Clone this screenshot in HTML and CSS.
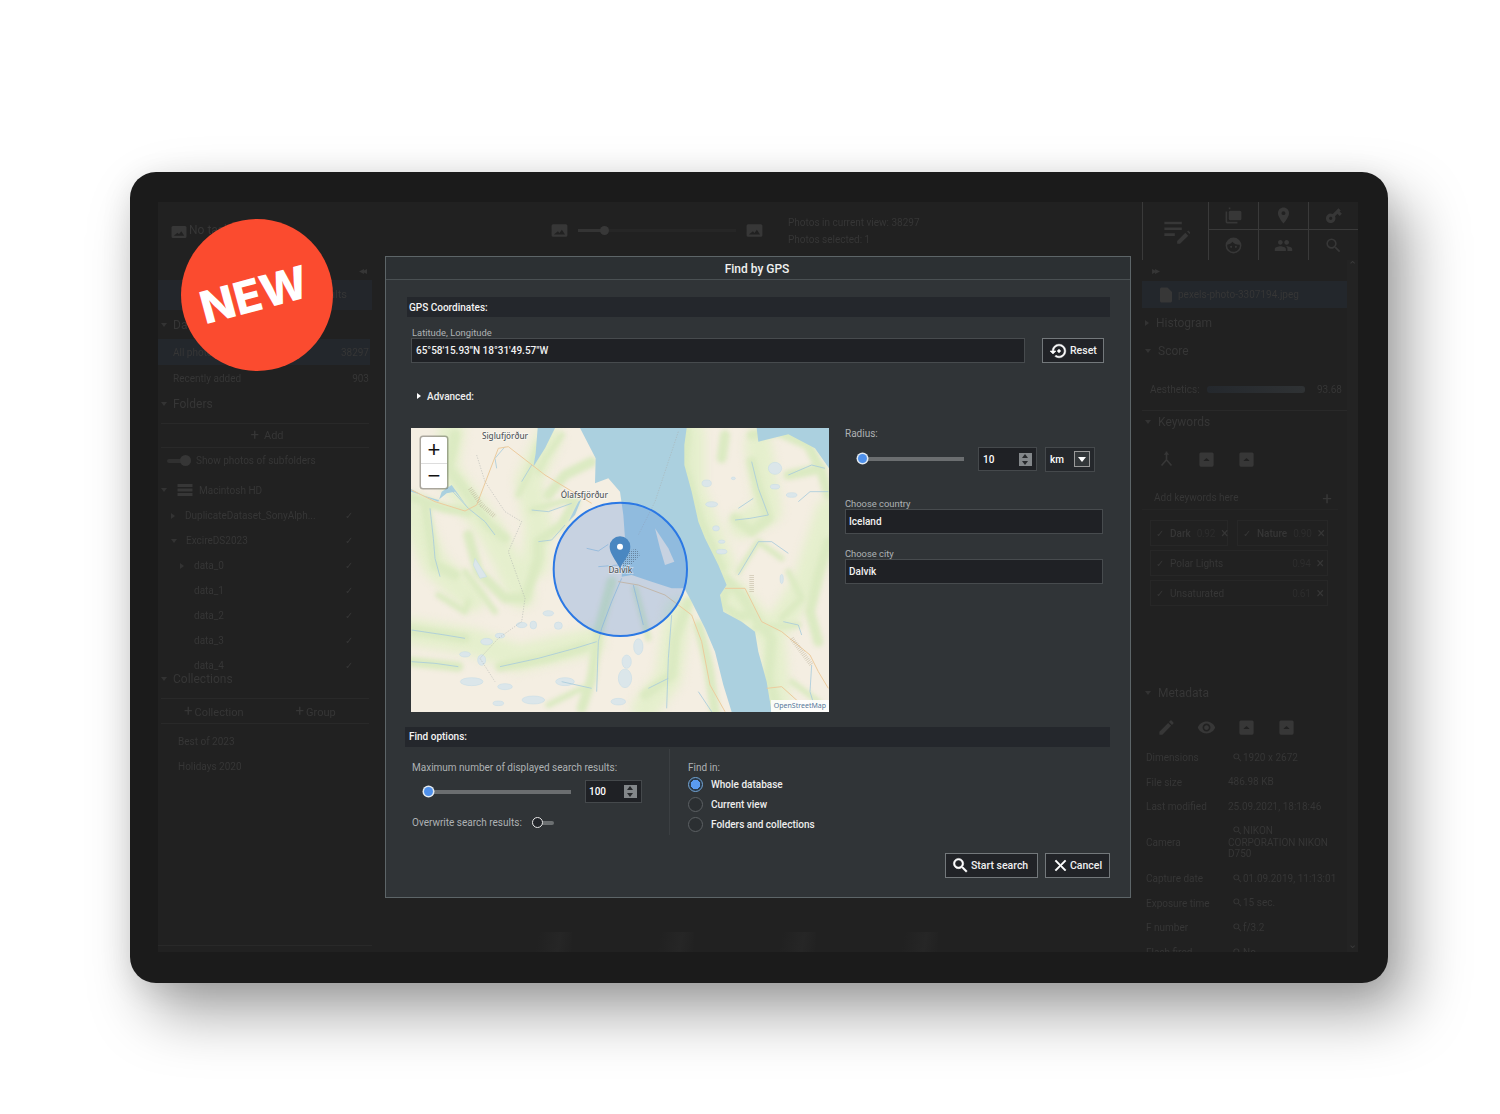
FILE: index.html
```html
<!DOCTYPE html>
<html lang="en">
<head>
<meta charset="utf-8">
<title>Find by GPS</title>
<link rel="stylesheet" href="styles.css">
</head>
<body>
<svg class="defs" width="0" height="0" aria-hidden="true">
  <symbol id="i-search" viewBox="0 0 24 24"><path d="M15.5 14h-.79l-.28-.27A6.471 6.471 0 0 0 16 9.5 6.5 6.5 0 1 0 9.5 16c1.61 0 3.09-.59 4.23-1.57l.27.28v.79l5 4.99L20.49 19l-4.99-5zm-6 0C7.01 14 5 11.99 5 9.5S7.01 5 9.5 5 14 7.01 14 9.5 11.99 14 9.5 14z"/></symbol>
  <symbol id="i-close" viewBox="0 0 24 24"><path d="M19 6.41L17.59 5 12 10.59 6.41 5 5 6.41 10.59 12 5 17.59 6.41 19 12 13.41 17.59 19 19 17.59 13.41 12z"/></symbol>
  <symbol id="i-reset" viewBox="0 0 24 24"><path d="M14 12c0-1.1-.9-2-2-2s-2 .9-2 2 .9 2 2 2 2-.9 2-2zm-2-9c-4.97 0-9 4.03-9 9H0l4 4 4-4H5c0-3.87 3.13-7 7-7s7 3.13 7 7-3.13 7-7 7c-1.51 0-2.91-.49-4.06-1.3l-1.42 1.44C8.04 20.3 9.94 21 12 21c4.97 0 9-4.03 9-9s-4.03-9-9-9z"/></symbol>
  <symbol id="i-place" viewBox="0 0 24 24"><path d="M12 2C8.13 2 5 5.13 5 9c0 5.25 7 13 7 13s7-7.75 7-13c0-3.87-3.13-7-7-7zm0 9.5a2.5 2.5 0 0 1 0-5 2.5 2.5 0 0 1 0 5z"/></symbol>
  <symbol id="i-people" viewBox="0 0 24 24"><path d="M16 11c1.66 0 2.99-1.34 2.99-3S17.66 5 16 5c-1.66 0-3 1.34-3 3s1.34 3 3 3zm-8 0c1.66 0 2.99-1.34 2.99-3S9.66 5 8 5C6.34 5 5 6.34 5 8s1.34 3 3 3zm0 2c-2.33 0-7 1.17-7 3.5V19h14v-2.5c0-2.33-4.67-3.5-7-3.5zm8 0c-.29 0-.62.02-.97.05 1.16.84 1.97 1.97 1.97 3.45V19h6v-2.5c0-2.33-4.67-3.5-7-3.5z"/></symbol>
  <symbol id="i-edit" viewBox="0 0 24 24"><path d="M3 17.25V21h3.75L17.81 9.94l-3.75-3.75L3 17.25zM20.71 7.04a1 1 0 0 0 0-1.41l-2.34-2.34a1 1 0 0 0-1.41 0l-1.83 1.83 3.75 3.75 1.83-1.83z"/></symbol>
  <symbol id="i-eye" viewBox="0 0 24 24"><path d="M12 4.5C7 4.5 2.73 7.61 1 12c1.73 4.39 6 7.5 11 7.5s9.27-3.11 11-7.5c-1.73-4.39-6-7.5-11-7.5zM12 17c-2.76 0-5-2.24-5-5s2.24-5 5-5 5 2.24 5 5-2.24 5-5 5zm0-8c-1.66 0-3 1.34-3 3s1.34 3 3 3 3-1.34 3-3-1.34-3-3-3z"/></symbol>
  <symbol id="i-file" viewBox="0 0 24 24"><path d="M14 2H6c-1.1 0-2 .9-2 2v16c0 1.1.9 2 2 2h12c1.1 0 2-.9 2-2V8l-6-6z"/></symbol>
  <symbol id="i-copy" viewBox="0 0 24 24"><path d="M2 7h2v13h13v2H4a2 2 0 0 1-2-2zM6 2h2v2H6zM8 6h12a2 2 0 0 1 2 2v8a2 2 0 0 1-2 2H8a2 2 0 0 1-2-2V8a2 2 0 0 1 2-2z"/></symbol>
  <symbol id="i-key" viewBox="0 0 24 24"><path transform="rotate(-45 12 12)" d="M12.65 10A5.99 5.99 0 0 0 7 6c-3.31 0-6 2.69-6 6s2.69 6 6 6a5.99 5.99 0 0 0 5.65-4H17v4h4v-4h2v-4H12.65zM7 14c-1.1 0-2-.9-2-2s.9-2 2-2 2 .9 2 2-.9 2-2 2z"/></symbol>
  <symbol id="i-notes" viewBox="0 0 24 24"><path d="M2 4h15v2.2H2zM2 9h15v2.2H2zM2 14h9v2.2H2zM13 20.5v2.5h2.5l7-7-2.500-2.500zM21.500 12.500l2 2 1-1-2-2z"/></symbol>
  <symbol id="i-face" viewBox="0 0 24 24"><path d="M12 2a10 10 0 1 0 0 20 10 10 0 0 0 0-20zm0 18a8 8 0 0 1-8-8c0-.4 0-.8.1-1.100 2.600-.2 5-1.500 6.400-3.600 2 2.300 5 3.700 8.300 3.700h1c.1.300.2.700.2 1 0 4.400-3.600 8-8 8zM9 15a1.300 1.300 0 1 0 0-2.600A1.300 1.300 0 0 0 9 15zm6 0a1.300 1.300 0 1 0 0-2.600 1.300 1.300 0 0 0 0 2.600z"/></symbol>
  <symbol id="i-box" viewBox="0 0 24 24"><path d="M5 3h14a2 2 0 0 1 2 2v14a2 2 0 0 1-2 2H5a2 2 0 0 1-2-2V5a2 2 0 0 1 2-2zm7 7l-4 4h8z"/></symbol>
  <symbol id="i-photo" viewBox="0 0 24 24"><path d="M4 4h16a2 2 0 0 1 2 2v12a2 2 0 0 1-2 2H4a2 2 0 0 1-2-2V6a2 2 0 0 1 2-2zm1 13h14l-4-6-3 4-2-2z"/></symbol>
  <symbol id="i-merge" viewBox="0 0 24 24"><path d="M11 2h2v10l6 7-1.500 1.300L12 14l-5.500 6.300L5 19l6-7zM8.500 6L12 2l3.500 4z"/></symbol>
</svg>

<main class="device">
  <div class="screen">
    <aside class="left">
      <div class="l-top">
        <svg class="ic ic-16"><use href="#i-photo"/></svg><span>No task</span>
      </div>
      <div class="l-collapse">&#9666;&#9666;</div>
      <div class="l-tab">Filter results</div>
      <div class="l-head l-db"><i class="tri"></i>Database</div>
      <div class="l-item l-sel"><span>All photos</span><span>38297</span></div>
      <div class="l-item"><span>Recently added</span><span>903</span></div>
      <div class="l-head l-fold"><i class="tri"></i>Folders</div>
      <div class="l-add"><span class="plus">+</span>Add</div>
      <div class="l-sub"><i class="dim-toggle"></i>Show photos of subfolders</div>
      <div class="l-drive"><i class="tri"></i><svg class="ic ic-16" viewBox="0 0 24 24"><path d="M2 4h20v4H2zM2 10h20v4H2zM2 16h20v4H2z"/></svg>Macintosh HD</div>
      <div class="tree">
        <div class="t-row t1"><i class="tri-r"></i><span>DuplicateDataset_SonyAlph...</span><b>&#10003;</b></div>
        <div class="t-row t1"><i class="tri"></i><span>ExcireDS2023</span><b>&#10003;</b></div>
        <div class="t-row t2"><i class="tri-r"></i><span>data_0</span><b>&#10003;</b></div>
        <div class="t-row t2"><i></i><span>data_1</span><b>&#10003;</b></div>
        <div class="t-row t2"><i></i><span>data_2</span><b>&#10003;</b></div>
        <div class="t-row t2"><i></i><span>data_3</span><b>&#10003;</b></div>
        <div class="t-row t2"><i></i><span>data_4</span><b>&#10003;</b></div>
      </div>
      <div class="l-head l-coll"><i class="tri"></i>Collections</div>
      <div class="l-actions"><span><span class="plus">+</span>Collection</span><span><span class="plus">+</span>Group</span></div>
      <div class="l-c-item">Best of 2023</div>
      <div class="l-c-item">Holidays 2020</div>
    </aside>

    <section class="center">
      <div class="c-top">
        <svg class="ic ic-18"><use href="#i-photo"/></svg>
        <div class="c-slider"><i></i></div>
        <svg class="ic ic-18"><use href="#i-photo"/></svg>
        <div class="c-info"><div>Photos in current view: 38297</div><div>Photos selected: 1</div></div>
      </div>
      <div class="c-thumbs"><i></i><i></i><i></i><i></i></div>
    </section>

    <aside class="right">
      <div class="r-tools">
        <div class="r-main"><svg class="ic ic-28"><use href="#i-notes"/></svg></div>
        <div class="r-grid">
          <div><svg class="ic ic-18"><use href="#i-copy"/></svg></div>
          <div><svg class="ic ic-18"><use href="#i-place"/></svg></div>
          <div><svg class="ic ic-18"><use href="#i-key"/></svg></div>
          <div><svg class="ic ic-18"><use href="#i-face"/></svg></div>
          <div><svg class="ic ic-18"><use href="#i-people"/></svg></div>
          <div><svg class="ic ic-18"><use href="#i-search"/></svg></div>
        </div>
      </div>
      <div class="r-expand">&#9656;&#9656;</div>
      <div class="r-file"><svg class="ic ic-16"><use href="#i-file"/></svg>pexels-photo-3307194.jpeg</div>
      <div class="r-head r-hist"><i class="tri-r"></i>Histogram</div>
      <div class="r-head"><i class="tri"></i>Score</div>
      <div class="r-score"><span>Aesthetics:</span><i class="bar"></i><span>93.68</span></div>
      <div class="r-head r-keys"><i class="tri"></i>Keywords</div>
      <div class="r-icons">
        <svg class="ic ic-18"><use href="#i-merge"/></svg>
        <svg class="ic ic-18"><use href="#i-box"/></svg>
        <svg class="ic ic-18"><use href="#i-box"/></svg>
      </div>
      <div class="r-add"><span>Add keywords here</span><b>+</b></div>
      <div class="tags">
        <div class="tag tag-s"><em>&#10003;</em><strong>Dark</strong><span>0.92</span><em class="x">&#215;</em></div>
        <div class="tag tag-m"><em>&#10003;</em><strong>Nature</strong><span>0.90</span><em class="x">&#215;</em></div>
        <div class="tag tag-l"><em>&#10003;</em><strong class="thin">Polar Lights</strong><span class="push">0.94</span><em class="x">&#215;</em></div>
        <div class="tag tag-l"><em>&#10003;</em><strong class="thin">Unsaturated</strong><span class="push">0.61</span><em class="x">&#215;</em></div>
      </div>
      <div class="r-head r-meta"><i class="tri"></i>Metadata</div>
      <div class="r-icons r-icons-m">
        <svg class="ic ic-18"><use href="#i-edit"/></svg>
        <svg class="ic ic-18"><use href="#i-eye"/></svg>
        <svg class="ic ic-18"><use href="#i-box"/></svg>
        <svg class="ic ic-18"><use href="#i-box"/></svg>
      </div>
      <dl class="meta">
        <div><dt>Dimensions</dt><dd><svg class="ic ic-10"><use href="#i-search"/></svg>1920 x 2672</dd></div>
        <div><dt>File size</dt><dd>486.98 KB</dd></div>
        <div><dt>Last modified</dt><dd>25.09.2021, 18:18:46</dd></div>
        <div class="cam"><dt>Camera</dt><dd><svg class="ic ic-10"><use href="#i-search"/></svg>NIKON<br>CORPORATION NIKON<br>D750</dd></div>
        <div><dt>Capture date</dt><dd><svg class="ic ic-10"><use href="#i-search"/></svg>01.09.2019, 11:13:01</dd></div>
        <div><dt>Exposure time</dt><dd><svg class="ic ic-10"><use href="#i-search"/></svg>15 sec.</dd></div>
        <div><dt>F number</dt><dd><svg class="ic ic-10"><use href="#i-search"/></svg>f/3.2</dd></div>
        <div><dt>Flash fired</dt><dd><svg class="ic ic-10"><use href="#i-search"/></svg>No</dd></div>
      </dl>
      <div class="r-scroll"><span>&#8963;</span><span class="down">&#8964;</span></div>
    </aside>
  </div>

  <div class="badge"><span>NEW</span></div>

  <div class="dialog">
    <header class="d-title">Find by GPS</header>
    <div class="d-body">
      <h2 class="sec sec-gps">GPS Coordinates:</h2>
      <div class="coord">
        <label class="lab lab-coord">Latitude, Longitude</label>
        <div class="coord-row">
          <div class="field f-coord">65°58'15.93"N 18°31'49.57"W</div>
          <button class="btn btn-reset"><svg class="ic-btn" width="18" height="18"><use href="#i-reset"/></svg>Reset</button>
        </div>
      </div>
      <div class="adv"><i class="tri-w"></i>Advanced:</div>

      <div class="geo">
        <div class="map">
          <svg class="map-svg" viewBox="18 9 1254 852" width="418" height="284" role="img" aria-label="Map around Dalvik">
            <defs>
              <pattern id="hatch" width="6" height="6" patternUnits="userSpaceOnUse"><circle cx="2" cy="2" r="1.300" class="m-hatch"/></pattern>
            </defs>
            <rect class="m-land" x="18" y="9" width="1254" height="852"/>
            <g class="m-wash">
              <path d="M140 20L120 130 190 230 260 320 300 400 350 510"/>
              <path d="M430 40L370 170 400 300 390 420"/>
              <path d="M18 620L200 650 340 700 560 650"/>
              <path d="M18 250L90 420 200 520"/>
              <path d="M860 30L860 200 950 420"/>
              <path d="M1060 60L1090 260 1010 300"/>
              <path d="M1272 260L1200 480 1130 590"/>
              <path d="M820 560L790 760 720 850"/>
              <path d="M980 500L1100 640 1120 861"/>
            </g>
            <g class="m-green">
              <path d="M845 20L838 120 865 220 890 300 950 430"/>
              <path d="M1040 30L1120 20 1210 60 1250 140 1270 210"/>
              <path d="M1040 110L1060 190 1090 280 1040 320 990 280"/>
              <path d="M1270 350L1240 450 1215 560 1240 650"/>
              <path d="M960 460L1010 510 1060 590 1100 640 1090 760 1120 860"/>
              <path d="M960 30L950 100M1150 150L1250 130"/>
              <path d="M150 30L130 130 190 210 250 300 300 340"/>
              <path d="M560 110L480 150 430 210"/>
              <path d="M20 215L120 250 190 260"/>
              <path d="M60 240L90 420 150 450"/>
              <path d="M190 330L220 440 300 520 360 520 400 400 400 350 470 300 510 230"/>
              <path d="M620 470L580 620 560 760 530 850"/>
              <path d="M850 530L810 640 800 750 720 810"/>
              <path d="M880 600L910 720 930 860"/>
              <path d="M20 615L180 640M20 710L160 725M285 725L420 700 540 665"/>
              <path d="M960 500L950 540 1000 575 1030 570"/>
              <path class="wide" d="M1130 400L1060 350 1000 440"/>
              <path class="wide" d="M400 60L370 150 340 210M470 30L420 100 400 140"/>
              <path class="wide" d="M380 255L490 225"/>
              <path class="wide" d="M530 790L430 840M1050 610L1180 600"/>
              <path class="wide" d="M100 510L180 560 190 530M270 560L180 440"/>
              <path class="wide" d="M1150 440L1190 520 1130 580M1160 770L1240 830"/>
              <path class="wide" d="M690 490L720 600 730 640"/>
            </g>
            <path class="m-water" d="M525 9L845 9 838 60 838 120 860 200 880 290 900 340 940 420 965 480 945 510 955 560 1010 590 1050 620 1060 680 1085 770 1100 861 980 861 955 780 930 680 900 610 860 530 838 490 800 490 740 470 680 450 650 455 660 340 655 270 645 200 610 160 570 175 572 100Z"/>
            <path class="m-water" d="M1055 9L1272 9 1272 130 1230 70 1150 28 1060 50Z"/>
            <path class="m-water" d="M398 9L450 9 420 70 385 125 392 85Z"/>
            <path class="m-water" d="M18 192L60 215 100 230 110 200 140 180 190 250 150 200 125 205 100 225 50 210 18 200Z"/>
            <path class="m-water" d="M490 290L520 230 560 195 530 220 510 270Z"/>
            <path class="m-land" d="M750 310L790 370 808 410 780 420 765 370Z"/>
            <g class="m-lake">
              <path d="M210 400L245 455 225 460 205 420Z"/>
              <ellipse cx="245" cy="650" rx="18" ry="10"/><ellipse cx="285" cy="632" rx="14" ry="7"/>
              <ellipse cx="350" cy="600" rx="16" ry="8"/><ellipse cx="385" cy="600" rx="10" ry="12"/>
              <ellipse cx="460" cy="602" rx="12" ry="11"/><ellipse cx="430" cy="565" rx="16" ry="8"/>
              <ellipse cx="180" cy="688" rx="16" ry="8"/><ellipse cx="230" cy="705" rx="12" ry="16"/>
              <ellipse cx="200" cy="770" rx="34" ry="12"/><ellipse cx="300" cy="785" rx="22" ry="9"/>
              <ellipse cx="385" cy="825" rx="34" ry="12"/><ellipse cx="480" cy="770" rx="28" ry="12"/>
              <ellipse cx="280" cy="835" rx="16" ry="7"/><ellipse cx="660" cy="760" rx="20" ry="28"/>
              <ellipse cx="665" cy="710" rx="14" ry="20"/><ellipse cx="700" cy="665" rx="14" ry="24"/>
              <ellipse cx="640" cy="830" rx="22" ry="10"/>
              <ellipse cx="905" cy="175" rx="14" ry="10"/><ellipse cx="920" cy="238" rx="18" ry="8"/>
              <ellipse cx="933" cy="310" rx="10" ry="8"/><ellipse cx="950" cy="380" rx="16" ry="7"/>
              <ellipse cx="950" cy="350" rx="10" ry="5"/><ellipse cx="1110" cy="130" rx="20" ry="18"/>
              <ellipse cx="1110" cy="185" rx="14" ry="7"/><ellipse cx="1160" cy="210" rx="16" ry="7"/>
              <ellipse cx="1130" cy="462" rx="5" ry="14"/><ellipse cx="985" cy="160" rx="6" ry="4"/>
            </g>
            <g class="m-river">
              <path d="M75 250L85 340 90 400 105 455"/>
              <path d="M130 185L190 250 240 290 270 330"/>
              <path d="M300 65L270 100 275 130M380 120L350 170"/>
              <path d="M500 235L430 260 380 255M400 350L440 345 480 300"/>
              <path d="M545 370L580 378 610 358M580 425L640 420 690 450"/>
              <path d="M650 460L620 530 590 610 580 650 575 800M685 480L715 600"/>
              <path d="M285 725L400 700 510 670 575 650"/>
              <path d="M800 570L790 700 785 850M730 790L790 760"/>
              <path d="M20 615L120 630 180 640M20 710L90 715 160 725"/>
              <path d="M1040 110L1060 190 1090 270 1035 280 990 285M1045 220L1000 250"/>
              <path d="M1060 350L1100 350 1150 385M1000 450L1060 350"/>
              <path d="M1270 200L1215 200 1180 230M1150 150L1220 120 1260 130"/>
              <path d="M1220 720L1215 800 1230 850M1135 590L1180 600 1190 630"/>
              <path d="M920 860L880 800M470 770L560 790"/>
            </g>
            <g class="m-road">
              <path d="M20 195L90 230 180 258 215 240 280 70 310 65 420 150 560 235"/>
              <path d="M640 470L700 480 780 510 860 570 890 650 915 780 960 860"/>
              <path d="M960 490L1020 490 1070 590 1130 620 1215 690 1240 740 1270 790"/>
              <path d="M1085 790L1130 785 1180 830"/>
            </g>
            <path class="m-bound" d="M215 90L240 170 300 260 350 290 310 380 360 520 350 590 280 640 225 700 270 770"/>
            <path class="m-bound" d="M820 20L750 230 700 330"/>
            <path class="m-town" d="M195 190L230 240 270 275"/>
            <path class="m-town" d="M1040 450L1040 500M1160 640L1220 720"/>
            <text class="m-label" x="300" y="43" text-anchor="middle">Siglufjörður</text>
            <text class="m-label" x="538" y="220" text-anchor="middle">Ólafsfjörður</text>
            <circle class="m-radius" cx="646" cy="433" r="200"/>
            <text class="m-label" x="646" y="443" text-anchor="middle">Dalvík</text>
            <path class="m-shadow" d="M650 425L680 418 705 390 695 372 672 376 655 400Z"/>
            <path class="m-pin" d="M645 430C630 402 614 385 614 365a31 31 0 0 1 62 0C676 385 660 402 645 430Z"/>
            <circle class="m-dot" cx="645" cy="365" r="9"/>
          </svg>
          <div class="zoom"><button>+</button><button>&#8722;</button></div>
          <div class="attr">OpenStreetMap</div>
        </div>

        <div class="geo-side">
          <label class="lab lab-radius">Radius:</label>
          <div class="radius">
            <div class="slider s-radius"><i></i></div>
            <div class="spin spin-r"><span>10</span><span class="spin-b"></span></div>
            <div class="unit"><span>km</span><span class="unit-b"><i></i></span></div>
          </div>
          <label class="lab lab-small lab-country">Choose country</label>
          <div class="field f-bold">Iceland</div>
          <label class="lab lab-small lab-city">Choose city</label>
          <div class="field f-bold">Dalvík</div>
        </div>
      </div>

      <h2 class="sec sec-find">Find options:</h2>
      <div class="opts">
        <div class="opt-l">
          <label class="lab lab-max">Maximum number of displayed search results:</label>
          <div class="max-row">
            <div class="slider s-max"><i></i></div>
            <div class="spin spin-m"><span>100</span><span class="spin-b"></span></div>
          </div>
          <div class="over"><label class="lab">Overwrite search results:</label><span class="tog"><i></i></span></div>
        </div>
        <div class="opt-r">
          <label class="lab lab-in">Find in:</label>
          <div class="radio on"><i></i>Whole database</div>
          <div class="radio"><i></i>Current view</div>
          <div class="radio"><i></i>Folders and collections</div>
        </div>
      </div>
      <div class="actions">
        <button class="btn btn-start"><svg class="ic-btn" width="19" height="19"><use href="#i-search"/></svg>Start search</button>
        <button class="btn btn-cancel"><svg class="ic-btn" width="19" height="19"><use href="#i-close"/></svg>Cancel</button>
      </div>
    </div>
  </div>
</main>
</body>
</html>
```

FILE: styles.css
```css
* { box-sizing: border-box; }
html, body { margin: 0; padding: 0; background: #fff; }
body { width: 1500px; height: 1114px; overflow: hidden; font-family: Roboto, "Liberation Sans", sans-serif; }
.defs { position: absolute; }

.device {
  position: relative;
  width: 1258px; height: 811px;
  margin: 172px 0 0 130px;
  padding: 30px 30px 31px 28px;
  background: #1b1b1b;
  border-radius: 26px;
  box-shadow: 20px 30px 60px rgba(0,0,0,.36), 0 6px 30px rgba(0,0,0,.1);
}
.screen {
  display: grid;
  grid-template-columns: 214px 770px 216px;
  height: 750px;
  overflow: hidden;
  background: #212121;
  color: #363636;
  font-size: 10px;
  filter: blur(.6px);
}
.ic { fill: #373737; display: block; flex: none; }
.ic-10 { width: 11px; height: 11px; }
.ic-16 { width: 18px; height: 18px; }
.ic-18 { width: 19px; height: 19px; }
.ic-28 { width: 28px; height: 28px; }
.tri, .tri-r { display: inline-block; flex: none; width: 0; height: 0; }
.tri { border: 3.500px solid transparent; border-top: 4.500px solid #333; border-bottom: 0; }
.tri-r { border: 3.500px solid transparent; border-left: 4.500px solid #333; border-right: 0; }

/* left panel */
.left { display: flex; flex-direction: column; position: relative; }
.l-top { height: 56px; padding: 21px 0 0 12px; display: flex; gap: 1px; align-items: flex-start; font-size: 12px; }
.l-collapse { height: 22px; padding-right: 7px; text-align: right; font-size: 10px; line-height: 26px; letter-spacing: -2px; }
.l-tab { height: 30px; line-height: 30px; padding-right: 25px; text-align: right; background: #23262b; font-size: 11px; }
.l-head { display: flex; align-items: center; gap: 6px; padding-left: 3px; font-size: 12px; }
.l-db { height: 29px; }
.l-item { height: 26px; display: flex; align-items: center; justify-content: space-between; padding: 0 3px 0 15px; }
.l-sel { background: #23272c; margin-right: 2px; padding-right: 1px; }
.l-fold { height: 24px; padding-top: 1px; }
.l-add { margin: 8px 3px 0; height: 25px; display: flex; align-items: center; justify-content: center; gap: 3px; border-top: 1px solid #292929; border-bottom: 1px solid #292929; padding-left: 4px; font-size: 11px; }
.plus { font-size: 15px; line-height: 1; margin-right: 2px; }
.l-sub { height: 25px; display: flex; align-items: center; gap: 5px; padding-left: 9px; }
.dim-toggle { width: 24px; height: 4px; border-radius: 2px; background: #303030; position: relative; flex: none; }
.dim-toggle::after { content: ""; position: absolute; right: 0; top: -3.500px; width: 11px; height: 11px; border-radius: 50%; background: #363636; }
.l-drive { height: 30px; margin-top: 2px; display: flex; align-items: center; gap: 6px; padding-left: 3px; }
.l-drive .ic { margin: 0 -1px 0 3px; }
.tree { height: 167px; margin-top: -2px; overflow: hidden; padding-right: 19px; }
.t-row { height: 25px; display: flex; align-items: center; }
.t-row span { flex: 1; }
.t-row i { width: 5px; margin-right: 9px; }
.t-row b { font-weight: 400; font-size: 10px; }
.t1 { padding-left: 13px; }
.t2 { padding-left: 22px; }
.l-coll { height: 18px; }
.l-actions { margin: 10px 3px 0; height: 26px; display: flex; gap: 52px; align-items: center; border-top: 1px solid #292929; border-bottom: 1px solid #292929; padding-left: 23px; font-size: 11px; }
.l-c-item { height: 25px; line-height: 25px; padding-left: 20px; position: relative; top: 5px; }
.left::after { content: ""; position: absolute; left: 0; right: 0; top: 743px; height: 1px; background: #292929; }

/* center */
.center { display: flex; flex-direction: column; justify-content: space-between; }
.c-top { display: flex; align-items: center; height: 56px; padding: 0 0 0 178px; gap: 9px; }
.c-slider { width: 158px; height: 3px; background: #262626; position: relative; }
.c-slider::before { content: ""; position: absolute; left: 0; width: 27px; height: 100%; background: #343434; }
.c-slider i { position: absolute; left: 22px; top: -3px; width: 9px; height: 9px; border-radius: 50%; background: #383838; }
.c-info { margin-left: 15px; font-size: 10px; line-height: 17px; padding-top: 2px; }
.c-thumbs { height: 20px; display: flex; gap: 52px; padding-left: 130px; }
.c-thumbs i { width: 70px; background: linear-gradient(100deg, #212121 50%, #262626 80%, #212121); }

/* right */
.right { display: flex; flex-direction: column; overflow: hidden; position: relative; height: 750px; }
.right > * { flex: none; }
.r-tools { height: 58px; display: flex; }
.r-main { width: 66px; display: flex; align-items: center; justify-content: center; border-left: 1px solid #3a3a3a; }
.r-grid { width: 150px; display: grid; grid-template-columns: repeat(3, 50px); grid-template-rows: 28px 30px; border-left: 1px solid #3a3a3a; }
.r-grid div { display: flex; align-items: center; justify-content: center; border-right: 1px solid #3a3a3a; border-bottom: 1px solid #3a3a3a; }
.r-grid div:nth-child(n+4) { border-bottom: 0; }
.r-expand { height: 21px; padding-left: 10px; font-size: 10px; line-height: 22px; letter-spacing: -2px; }
.r-file { height: 27px; width: 205px; display: flex; align-items: center; gap: 3px; padding-left: 15px; background: #23272c; }
.r-head { display: flex; align-items: center; gap: 7px; height: 27px; padding-left: 3px; font-size: 12px; }
.r-hist { margin-top: 1px; }
.r-head + .r-head { margin-top: 1px; }
.r-score { margin-top: 13px; height: 24px; padding: 0 16px 0 8px; display: flex; align-items: center; justify-content: space-between; gap: 7px; }
.bar { flex: 1; height: 7px; margin-right: 5px; background: linear-gradient(90deg, #24282d, #2f3234); border-radius: 3px; }
.r-keys { margin-top: 9px; height: 22px; border-top: 1px solid #292929; width: 205px; }
.r-icons { margin-top: 15px; height: 24px; display: flex; gap: 21px; padding-left: 15px; align-items: center; }
.r-add { margin-top: 15px; height: 24px; width: 196px; display: flex; align-items: center; justify-content: space-between; padding: 0 6px 0 12px; border-bottom: 1px solid #252525; }
.r-add b { font-weight: 400; font-size: 17px; }
.tags { margin-top: 10px; width: 196px; display: flex; flex-wrap: wrap; gap: 4px 9px; padding-left: 8px; }
.tag { height: 26px; display: flex; align-items: center; gap: 6px; padding: 0 3px 0 5px; border: 1px solid #272727; font-size: 10px; }
.tag em { font-style: normal; }
.tag em.x { font-size: 14px; line-height: 1; }
.tag strong { font-weight: 500; }
.tag strong.thin { font-weight: 400; }
.tag span { color: #2d2d2d; letter-spacing: -.3px; }
.push { margin-left: auto; }
.tag-s { width: 78px; }
.tag-m { width: 91px; }
.tag-l { width: 178px; }
.r-meta { margin-top: 74px; height: 26px; }
.r-icons-m { margin-top: 9px; }
.meta { margin: 6px 0 0; padding: 0 8px 0 4px; }
.meta > div { display: grid; grid-template-columns: 82px 1fr; height: 24.700px; align-items: center; }
.meta dd { margin: 0; display: block; line-height: 11.500px; }
.meta dd .ic { display: inline-block; margin: 0 0 0 4px; vertical-align: -2px; }
.meta > .cam { height: 47px; }
.r-scroll { position: absolute; right: 0; top: 58px; bottom: 0; width: 11px; display: flex; flex-direction: column; justify-content: space-between; align-items: center; background: #232323; font-size: 11px; line-height: 12px; color: #3a3a3a; }
.r-scroll .down { margin-bottom: 1px; }

/* badge */
.badge {
  position: absolute; left: 51px; top: 47px;
  width: 152px; height: 152px; border-radius: 50%;
  background: #fb4b2f;
  display: flex; align-items: center; justify-content: center;
}
.badge span {
  color: #fff; font-family: Inter, sans-serif; font-weight: 800; font-size: 45px; line-height: 1;
  transform: translate(-3px, -1px) rotate(-15deg);
}

/* dialog */
.dialog {
  position: absolute; left: 255px; top: 84px;
  width: 746px; height: 642px;
  background: #303437;
  border: 1px solid #5d6568;
  color: #fff;
  display: flex; flex-direction: column;
}
.d-title { height: 23px; flex: none; background: #2c3033; border-bottom: 1px solid #4a5053; text-align: center; font-size: 12px; font-weight: 500; line-height: 24px; color: #f0f0f0; padding-right: 2px; }
.d-body { flex: 1; padding: 17px 20px 0 21px; display: flex; flex-direction: column; }
.sec { margin: 0; height: 20px; line-height: 21px; padding-left: 2px; background: #24272c; font-size: 10px; font-weight: 500; color: #f4f4f4; }
.lab { display: block; font-size: 10px; line-height: 12px; color: #aeb2b4; }
.lab-small { font-size: 9.400px; }
.coord { padding-left: 4px; }
.lab-coord { margin: 10px 0 0 1px; line-height: 11px; font-size: 9.400px; }
.coord-row { display: flex; justify-content: space-between; padding-right: 6px; }
.field { height: 25px; line-height: 23px; padding-left: 4px; background: #1f2125; border: 1px solid #474b4e; font-size: 10px; font-weight: 500; color: #f2f2f2; }
.f-coord { width: 614px; }
.btn { display: inline-flex; align-items: center; justify-content: flex-start; height: 25px; padding: 0; background: #212327; border: 1px solid #73787b; color: #f0f0f0; font: 500 10.500px Roboto, "Liberation Sans", sans-serif; }
.ic-btn { fill: #fff; stroke: #fff; stroke-width: .7; flex: none; }
.btn-reset { width: 62px; gap: 2px; padding-left: 7px; }
.adv { display: flex; align-items: center; gap: 6px; margin: 27px 0 0 10px; height: 12px; font-size: 10px; font-weight: 500; color: #eee; }
.tri-w { width: 0; height: 0; border: 3.500px solid transparent; border-left: 4.500px solid #fff; border-right: 0; }
.geo { display: flex; margin: 26px 0 0 4px; height: 284px; }
.map { position: relative; width: 418px; height: 284px; flex: none; overflow: hidden; }
.map-svg { display: block; }
.m-land { fill: #f4eee2; }
.m-water { fill: #abd0df; }
.m-wash { filter: blur(14px); }
.m-wash path { fill: none; stroke: #e5efcd; stroke-width: 80; stroke-linecap: round; stroke-linejoin: round; }
.m-green { filter: blur(7px); }
.m-green path { fill: none; stroke: #dbeac2; stroke-width: 30; stroke-linecap: round; stroke-linejoin: round; }
.m-green path.wide { stroke-width: 18; }
.m-lake { fill: #dbe6ea; stroke: #c3dae6; stroke-width: 1.500; }
.m-river path { fill: none; stroke: #a8cbdc; stroke-width: 2.500; }
.m-road path { fill: none; stroke: #eccb9d; stroke-width: 3; }
.m-bound { fill: none; stroke: #a9acab; stroke-width: 1.500; stroke-dasharray: 4 4; }
.m-town { fill: none; stroke: #b5ab93; stroke-width: 14; stroke-dasharray: 2 4; opacity: .6; }
.m-label { font: 500 24.500px "Noto Sans", sans-serif; fill: #55595c; paint-order: stroke; stroke: rgba(255,255,255,.55); stroke-width: 4px; }
.m-radius { fill: rgba(60,120,220,.24); stroke: #2b78e4; stroke-width: 6; }
.m-hatch { fill: #2b3040; }
.m-shadow { fill: url(#hatch); }
.m-pin { fill: #4a87c1; }
.m-dot { fill: #fff; }
.zoom { position: absolute; left: 10px; top: 9px; width: 26px; display: flex; flex-direction: column; background: #fff; border-radius: 2px; box-shadow: 0 0 0 1.500px rgba(0,0,0,.3); }
.zoom button { height: 25.500px; padding: 0; border: 0; background: none; color: #111; font: 400 22px/1 Arial, "Liberation Sans", sans-serif; }
.zoom button + button { border-top: 1px solid #ddd; }
.attr { position: absolute; right: 0; bottom: 0; padding: 0 3px; height: 12px; background: rgba(255,255,255,.85); font: 400 7px/12px "Noto Sans", sans-serif; color: #56789a; }
.geo-side { width: 258px; margin-left: 16px; }
.lab-radius { height: 12px; padding-top: 0; }
.radius { display: flex; align-items: center; margin-top: 6px; height: 26px; }
.slider { position: relative; height: 4px; background: #6b6e70; flex: none; }
.slider i { position: absolute; left: -6px; top: -2.500px; width: 9px; height: 9px; border-radius: 50%; background: #4f90ea; box-shadow: 0 0 0 1.500px #e3eaf0; }
.s-radius { width: 99px; margin: -1px 0 0 20px; }
.s-radius i { left: -7px; }
.spin { display: flex; align-items: center; justify-content: space-between; background: #1f2125; border: 1px solid #45494c; font-size: 10px; font-weight: 500; padding: 0 4px; }
.spin-r { width: 59px; height: 24px; margin-left: 14px; }
.spin-b { width: 13px; height: 13px; background: #83878a; position: relative; flex: none; }
.spin-b::before, .spin-b::after { content: ""; position: absolute; left: 3px; border: 3.500px solid transparent; }
.spin-b::before { top: -1px; border-bottom: 4px solid #26282b; border-top: 0; margin-top: 2px; }
.spin-b::after { bottom: 1px; border-top: 4px solid #26282b; border-bottom: 0; }
.unit { width: 50px; height: 25px; margin-left: 8px; display: flex; align-items: center; justify-content: space-between; padding: 0 4px; background: #25282c; border: 1px solid #45494c; font-size: 10px; font-weight: 500; }
.unit-b { width: 16px; height: 16px; border: 1px solid #999; display: flex; align-items: center; justify-content: center; background: #33373a; }
.unit-b i { width: 0; height: 0; border: 4px solid transparent; border-top: 5px solid #fff; border-bottom: 0; }
.lab-country { margin-top: 26px; height: 11px; line-height: 11px; }
.lab-city { margin-top: 14px; height: 11px; line-height: 11px; }
.f-bold { padding-left: 3px; }
.sec-find { margin-top: 15px; padding-left: 4px; margin-left: -2px; line-height: 19px; }
.opts { display: flex; height: 86px; margin-top: 2px; }
.opt-l { width: 263px; padding-left: 5px; border-right: 1px solid #3b3f42; }
.lab-max { margin-top: 13px; }
.max-row { display: flex; align-items: center; margin-top: 6px; height: 23px; }
.s-max { width: 141px; margin-left: 18px; }
.spin-m { width: 57px; height: 23px; margin-left: 14px; padding-left: 3px; }
.over { display: flex; align-items: center; margin-top: 13px; gap: 10px; }
.over .lab { line-height: 14px; }
.tog { width: 22px; height: 4px; background: #6c7072; position: relative; border-radius: 2px; }
.tog i { position: absolute; left: 0; top: -4px; width: 11px; height: 11px; border-radius: 50%; border: 1.500px solid #e8e8e8; background: #22252a; }
.opt-r { padding-left: 18px; }
.lab-in { margin-top: 13px; }
.radio { display: flex; align-items: center; gap: 8px; height: 20px; font-size: 10px; font-weight: 500; color: #eee; }
.radio i { width: 15px; height: 15px; border-radius: 50%; border: 1px solid #5c6063; background: #2b2f32; flex: none; }
.on i { background: radial-gradient(circle, #5a9af0 0 4.500px, #2a3a4c 5px); border: 1.500px solid #71a5d6; }
.actions { display: flex; justify-content: flex-end; gap: 7px; margin-top: 18px; }
.btn-start { width: 93px; gap: 1px; padding-left: 5px; }
.btn-cancel { width: 65px; gap: 0; padding-left: 5px; }
```
